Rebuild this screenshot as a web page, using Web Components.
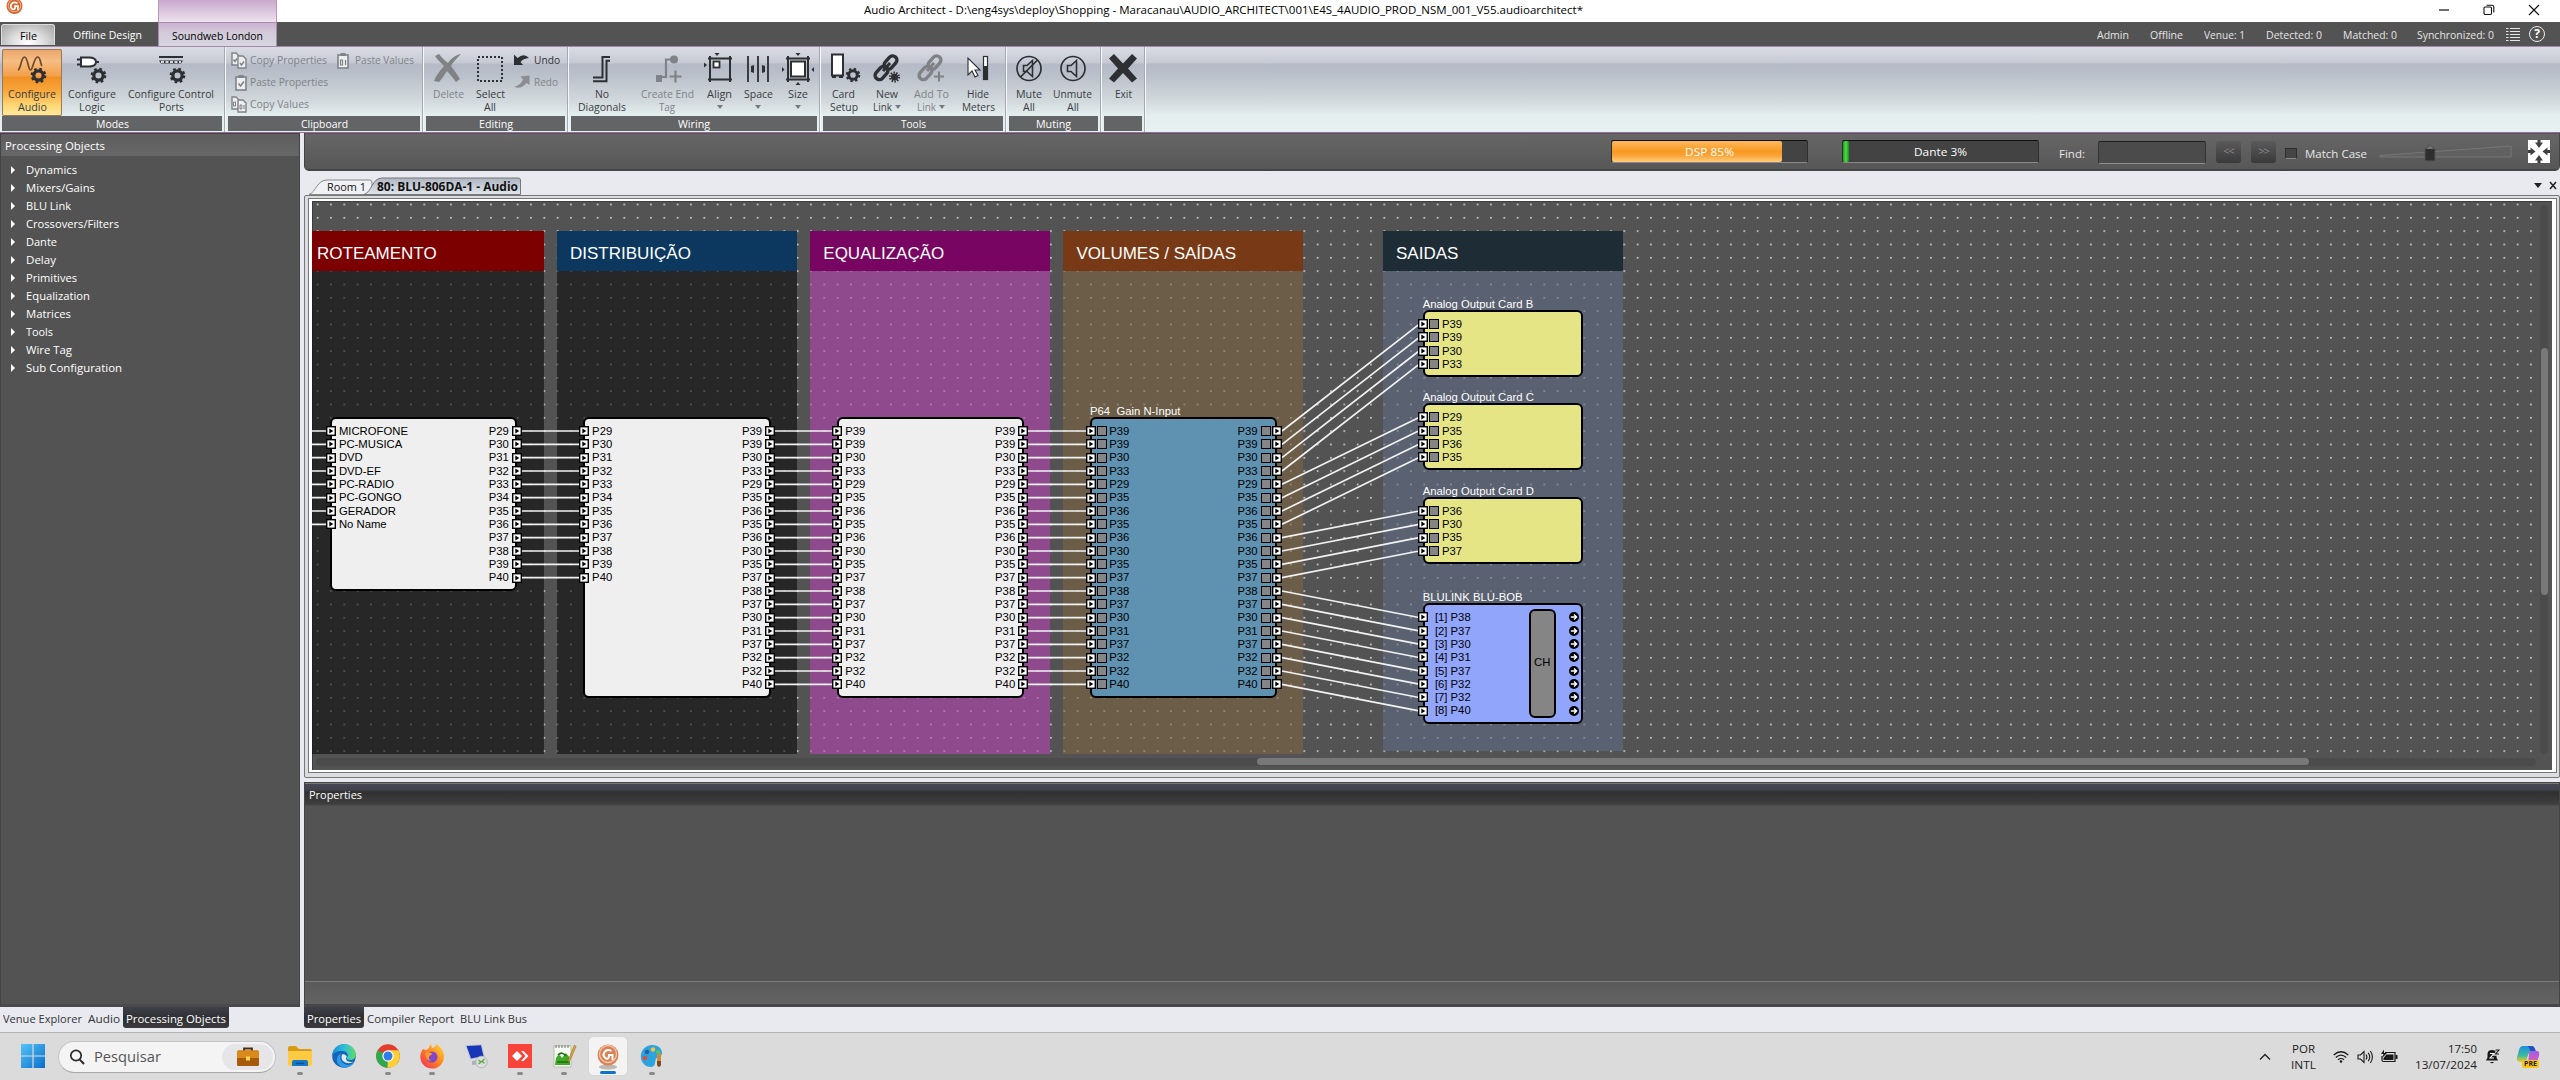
<!DOCTYPE html>
<html lang="pt-BR">
<head>
<meta charset="utf-8">
<title>Audio Architect</title>
<style>
html,body{margin:0;padding:0;width:2560px;height:1080px;overflow:hidden;background:#e8eaef}
body{font:11.5px/16px "Open Sans","Noto Sans",sans-serif;color:#111}
</style>
</head>
<body>
<audio-architect></audio-architect>
<script>
const make = (name, build, connected) => customElements.define(name, class extends HTMLElement {
  connectedCallback() {
    if (this.shadowRoot) return;
    this.attachShadow({ mode: 'open' }).innerHTML = build(this);
    if (connected) connected(this);
  }
});
const at = (el, n, d = '') => el.getAttribute(n) ?? d;

/* One line of text condensed or widened to a given width */
make('fit-text', el => `<style>:host{display:inline-block;white-space:pre;width:${at(el,'w')}px;text-align:left;flex:none}
span{display:inline-block;transform-origin:0 50%}</style><span><slot></slot></span>`, el => {
  const s = el.shadowRoot.querySelector('span');
  const n = s.offsetWidth ? s.getBoundingClientRect().width : 0;
  if (n) s.style.transform = `scaleX(${(+at(el,'w') / n).toFixed(4)})`;
});

/* ---------- icons ---------- */
const gear = (x, y, r, c = '#2e2f33') => {
  const t = 2 * Math.PI * r / 16;
  return `<circle cx="${x}" cy="${y}" r="${r*.72}" fill="none" stroke="${c}" stroke-width="${r*.5}"/><circle cx="${x}" cy="${y}" r="${r}" fill="none" stroke="${c}" stroke-width="${r*.42}" stroke-dasharray="${t}"/>`;
};
const D = '#2e2f33', G = '#808286';
const link = c => `<g fill="none" stroke="${c}" stroke-width="3.4"><rect x="-4.2" y="-7.5" width="8.4" height="15" rx="4.2" transform="translate(19.5 9.5) rotate(42)"/><rect x="-4.2" y="-7.5" width="8.4" height="15" rx="4.2" transform="translate(10.5 20) rotate(42)"/></g><path d="M12 18l7-8" stroke="${c}" stroke-width="3"/>`;
const frame = `<path d="M4 5.500H28M4 26.500H28M6 3v26M26 3v26" stroke="${D}" stroke-width="2" fill="none"/>`;
const clip = t => `<rect x="3" y="3" width="10" height="13" fill="#eceef0" stroke="${G}" stroke-width="1.600"/><rect x="5.500" y="1" width="5" height="3" fill="${G}"/>` + (t ? `<path d="M5.500 8v5h2v-5zM10.500 8v5" fill="none" stroke="${G}" stroke-width="1.200"/>` : `<path d="M5.500 9.500l2 2.500 3.500-4.500" fill="none" stroke="${G}" stroke-width="1.600"/>`);
const docs = t => `<path d="M1 1h4l3 3v9H1z" fill="#eceef0" stroke="${G}" stroke-width="1.400"/><path d="M7 4h5l3 3v9H7z" fill="#eceef0" stroke="${G}" stroke-width="1.400"/>` + (t ? `<path d="M2.500 6v4h2V6zM9 9v4h1.800V9zM13 9v4" fill="none" stroke="${G}" stroke-width="1"/>` : `<path d="M2.500 7.500l1.500 2 2-3M9 11l1.500 2 2.500-3.500" fill="none" stroke="${G}" stroke-width="1.400"/>`);
const speaker = (r = 0) => `<circle cx="16" cy="15.500" r="12" fill="none" stroke="${D}" stroke-width="1.700"/><path d="M10.500 12.500h3.500l5.500-5v16l-5.500-5h-3.500z" fill="none" stroke="${D}" stroke-width="1.600"/>${r ? `<path d="M7.500 24L24.500 7" stroke="${D}" stroke-width="1.700"/>` : ''}`;
const I = {
  audio: [32,32,`<path d="M2 17C5 16 5 4 8.500 4S12 17 14.500 17 18 4 21.500 4 24 11 26 13" fill="none" stroke="#6b4a2a" stroke-width="1.700"/>${gear(22.500,22.500,6.500)}`],
  logic: [32,32,`<path d="M5 4.500H14Q20 5 20 9t-6 4.500H5z" fill="#fff" stroke="${D}" stroke-width="2"/><path d="M1 6.500h4M1 11.500h4M20 9h3" stroke="${D}" stroke-width="2"/>${gear(22.500,22.500,6.500)}`],
  ports: [32,32,`<path d="M4 4h24" stroke="${D}" stroke-width="2"/><path d="M4 7.500h24l-2 3H6z" fill="${D}"/><path d="M6 9h20" stroke="#d5d8de" stroke-width="1.800" stroke-dasharray="3 1.500"/>${gear(22.500,22.500,6.500)}`],
  copyP: [16,17,docs(0)], copyV: [16,17,docs(1)], pasteP: [16,17,clip(0)], pasteV: [16,17,clip(1)],
  del: [32,32,`<path d="M3 3l4-2c3 4 6 7 9 9 3-4 7-8 13-9-4 4-8 8-10 12 3 4 6 8 9 13l-4 3c-3-4-6-8-9-11-3 4-5 8-8 11l-5-1c2-6 6-10 10-15C8 9 5 6 3 3z" fill="${G}"/>`],
  select: [32,32,`<rect x="4" y="4" width="24" height="24" fill="none" stroke="${D}" stroke-width="2" stroke-dasharray="2 2"/>`],
  undo: [16,14,`<path d="M0 1.500V12h9L6.500 9Q9 5.500 15 5 10-.5 3.500 5z" fill="${D}"/>`],
  redo: [16,14,`<path d="M15.500 0.500V10l-3-2Q7.500 14.500 0 12 7 10 9 4.500L6.500 1.500z" fill="#8b8d91"/>`],
  nodiag: [32,32,`<path d="M24 4h-7.500v20.500H7M24 7.800h-3.500v20.500H7" fill="none" stroke="${D}" stroke-width="2"/>`],
  endtag: [32,32,`<circle cx="23" cy="6.500" r="4" fill="${G}"/><path d="M5 22h6v7H5z" fill="${G}"/><path d="M10.500 24h4.500V6.500h6M24.500 17.500v12M18.500 23.500h12" fill="none" stroke="${G}" stroke-width="2.200"/>`],
  align: [32,32,`${frame}<rect x="9.500" y="8.500" width="6" height="6" fill="#fff" stroke="${D}" stroke-width="1.800"/><path d="M10.500 0h5l-2.500 3zM0 9.500v5l3-2.500z" fill="${D}"/>`],
  space: [32,32,`<path d="M6 3v26M16 3v26M26 3v26" stroke="${D}" stroke-width="1.800"/><path d="M9 13l3-1v8l-3-1zM23 13l-3-1v8l3-1z" fill="${D}"/>`],
  size: [32,32,`${frame}<rect x="9" y="8.500" width="14" height="15" fill="#fff" stroke="${D}" stroke-width="2"/><path d="M13.500 0h5L16 3zM13.500 32h5L16 29zM0 14v5l2.500-2.500zM32 14v5l-2.500-2.500z" fill="${D}"/>`],
  card: [32,32,`<rect x="4" y="1.500" width="11" height="21" fill="#fff" stroke="${D}" stroke-width="2"/><path d="M4 24h4M11 24h4" stroke="${D}" stroke-width="2"/>${gear(25,22,6)}`],
  newlink: [32,32,link(D)+`<circle cx="23.500" cy="24" r="3.500" fill="${D}"/><circle cx="23.500" cy="24" r="4.500" fill="none" stroke="${D}" stroke-width="2" stroke-dasharray="1.500 1.300"/>`],
  addlink: [32,32,link(G)+`<path d="M24 18.500v10M19 23.500h10" stroke="${G}" stroke-width="2"/>`],
  hide: [32,32,`<path d="M6 5v17l4-4 3 6 3-1.500-3-5.500h5z" fill="#fff" stroke="${D}" stroke-width="1.100"/><rect x="21.500" y="3.500" width="4" height="23" fill="#fff" stroke="${D}" stroke-width="1.200"/><path d="M21 13h5v14h-5z" fill="${D}"/>`],
  mute: [32,32,speaker(1)], unmute: [32,32,speaker()],
  exit: [32,32,`<path d="M2 5.500L7 1l9 9.500L25 1l5 4.500-9 10 9 10-5 4-9-9.500-9 9.500-5-4 9-10z" fill="${D}"/>`],
  min: [12,12,`<path d="M1 6h10" stroke="#111" stroke-width="1.200"/>`],
  restore: [12,12,`<rect x="1" y="3" width="7.500" height="7.500" rx="1.200" fill="none" stroke="#111" stroke-width="1.100"/><path d="M3.500 1.200h5.500q1.800 0 1.800 1.800v5.500" fill="none" stroke="#111" stroke-width="1.100"/>`],
  close: [12,12,`<path d="M1 1l10 10M11 1L1 11" stroke="#111" stroke-width="1.200"/>`],
  list: [14,14,`<path d="M0 .5h2.500M4 .5h10M0 3.500h2.500M4 3.500h10M0 6.500h2.500M4 6.500h10M0 9.500h2.500M4 9.500h10M0 12.500h2.500M4 12.500h10" stroke="#e6e6e6" stroke-width="1"/>`],
  expand: [22,23,`<path d="M0 0h22v23H0z" fill="#fff"/><path d="M9.500 0h3v2.500h2.500L11 8 7 2.500h2.500zM9.500 23h3v-2.500h2.500L11 15l-4 5.500h2.500zM0 10v3h2.500v2.500L7.500 11.500l-5-4V10zM22 10v3h-2.500v2.500l-5-4 5-4V10z" fill="#3f3f3f"/>`],
  logo: [17,17,`<circle cx="8.500" cy="8" r="8" fill="#d5662f"/><circle cx="8.500" cy="7.500" r="6.300" fill="none" stroke="#f5b08b" stroke-width="1"/><path d="M11.500 5.200Q7.500 3 5.500 6t1 5.200q3 1 2.500-3h3v4" fill="none" stroke="#fff" stroke-width="1.700"/>`],
  win: [24,24,`<defs><linearGradient id="w" x2="1" y2="1"><stop stop-color="#53c4f7"/><stop offset="1" stop-color="#0a6dcb"/></linearGradient></defs><path d="M0 0h11.400v11.400H0zM12.600 0H24v11.400H12.600zM0 12.600h11.400V24H0zM12.600 12.600H24V24H12.600z" fill="url(#w)"/>`],
  search: [16,16,`<circle cx="7" cy="6.500" r="5.200" fill="none" stroke="#2a2a2a" stroke-width="1.700"/><path d="M10.800 10.600l4.200 4.400" stroke="#2a2a2a" stroke-width="2"/>`],
  brief: [22,20,`<path d="M7 4V1.500h8V4" fill="none" stroke="#4a2e12" stroke-width="1.800"/><rect y="3.500" width="22" height="15.500" rx="1.500" fill="#a85a0c"/><path d="M0 5q0-1.500 1.500-1.500h19Q22 3.500 22 5v6H0z" fill="#d98a1c"/><rect x="9" y="9.500" width="4" height="4" fill="#ffd54a"/>`],
  folder: [24,24,`<path d="M0 4q0-2 2-2h6l3 3h11q2 0 2 2v3H0z" fill="#d99a16"/><path d="M0 7h24v13q0 2-2 2H2q-2 0-2-2z" fill="#ffcb45"/><path d="M4 22v-4q0-2 2-2h12q2 0 2 2v4z" fill="#1477c9"/><path d="M8 19.500h8" stroke="#0b4f94" stroke-width="1.500"/>`],
  edge: [24,24,`<defs><linearGradient id="e" x2="1"><stop stop-color="#1b8fe0"/><stop offset=".5" stop-color="#2bc0d8"/><stop offset="1" stop-color="#5fdc62"/></linearGradient></defs><circle cx="12" cy="12" r="11.800" fill="#1565b8"/><path d="M.3 11C1 4.500 6 .2 12 .2c7 0 11.800 5 11.800 10.200 0 4-3 5.600-5.500 5.600-2 0-3.500-.8-3.500-1.700 0-.6 1-1.200 1-3C15.800 8.500 13 7 9.500 7 5 7 1.500 9 .3 11z" fill="url(#e)"/><path d="M9.500 9C7 12 8 18.500 13.500 20.500c3 1 6 0 8.500-2-3 6-11 6.500-15 2.500-4-4-2-10 2.500-12z" fill="#2e9be8"/><path d="M10 10.500c-1.500 4 .5 7.500 5 8.500 3 .5 6-.5 7-1.500-1.500.8-8 1-8-3.200l.8-1.300c0-1.500-2.500-3.500-4.800-2.500z" fill="#dfeaf2"/>`],
  chrome: [24,24,`<circle cx="12" cy="12" r="11.800" fill="#e33b2e"/><path d="M12 12L1.800 6A11.800 11.800 0 0 0 11.500 23.800L17 15z" fill="#2da94f"/><path d="M12 12l-.5 11.800A11.800 11.800 0 0 0 22.200 6.200H12z" fill="#fdd033"/><circle cx="12" cy="12" r="5.700" fill="#fff"/><circle cx="12" cy="12" r="4.500" fill="#2f7de8"/>`],
  firefox: [24,24,`<defs><linearGradient id="f" x1="1" x2="0" y2="1"><stop stop-color="#ffdc3e"/><stop offset=".45" stop-color="#ff8a1f"/><stop offset="1" stop-color="#f0265a"/></linearGradient></defs><path d="M3 5l3 1 2-1 3-5 1 4q4-1 4-4c5 3 8 7 8 12.500A11.800 11.800 0 0 1 .3 13C.3 9.500 1.500 7 3 5z" fill="url(#f)"/><circle cx="12" cy="13" r="5.500" fill="#8446c8"/><path d="M5.500 9q4-2 7 1l-3 2q-2 3 2 5-6 0-6-8z" fill="#ff9a2e"/>`],
  monitor: [24,24,`<path d="M1 1l17-1 3 13-15 3z" fill="#c7cdd6"/><path d="M2.500 2l14.500-.8L19.500 12 7 14.500z" fill="#1836b8"/><path d="M8 17l7-1 2 4-9 1z" fill="#aab2c0"/><circle cx="17.500" cy="18" r="5.800" fill="#d9dee0" stroke="#a8b0b4" stroke-width=".8"/><path d="M14.500 16l2.500 2-2.500 2M20.500 15l-2.500 2.200 2.500 2" fill="none" stroke="#58ad3c" stroke-width="1.400"/>`],
  anydesk: [24,24,`<path d="M0 0h24v24H0z" fill="#f9443b"/><path d="M9 7l5 5-5 5-5-5z" fill="#fff"/><path d="M13 7h2.500l5 5-5 5H13l4.500-5z" fill="#fff"/>`],
  notes: [24,24,`<path d="M2 2h17v21H2z" fill="#f6faf2" stroke="#a9b5a0" stroke-width=".8"/><path d="M4 1v3M7 1v3M10 1v3M13 1v3M16 1v3" stroke="#777"/><path d="M4 14q3-6 6 0l4-5 4 5v7H3z" fill="#43a828"/><path d="M6 11q4-4 8 1M5 18h12" stroke="#1d6f18" stroke-width="1.700" fill="none"/><path d="M22.500 1L24 2.500l-6 14-2 2 .5-3z" fill="#e6a63a" stroke="#8a5a18" stroke-width=".5"/>`],
  aa: [24,26,`<ellipse cx="12" cy="23" rx="9" ry="2.500" fill="#bdb8b4"/><circle cx="12" cy="11" r="10.500" fill="#d98255"/><circle cx="12" cy="10" r="8.500" fill="none" stroke="#f3c5aa" stroke-width="1.300"/><path d="M15.500 7Q11 4.500 8.500 8t1.500 6.500q3 1 3-3.500h3.500v5" fill="none" stroke="#fff" stroke-width="2"/>`],
  paint: [24,24,`<path d="M12 1c7 0 10 4 10 8 0 5-6 3-6.500 7C15 19 15 23 11 23 5 23 .8 18 .8 12.500.8 6 6 1 12 1z" fill="#2aa3de"/><circle cx="7" cy="8" r="2.200" fill="#1f5fa8"/><circle cx="13" cy="5.500" r="2.200" fill="#f5c534"/><circle cx="5" cy="14" r="2.200" fill="#e64b3b"/><circle cx="18" cy="8" r="2" fill="#5fc35b"/><path d="M17 10l4-1v9h-4z" fill="#c98b3e"/><path d="M17 17h4v4q-2 4-4 0z" fill="#7b4a1e"/>`],
  caret: [12,8,`<path d="M1 6.500L6 1.500l5 5" fill="none" stroke="#222" stroke-width="1.300"/>`],
  wifi: [16,14,`<path d="M.7 5Q8-1.500 15.300 5M2.800 7.500q5.200-4.700 10.400 0M5 9.800q3-2.600 6 0" fill="none" stroke="#1a1a1a" stroke-width="1.200"/><circle cx="8" cy="11.500" r="1.300" fill="#1a1a1a"/>`],
  vol: [17,14,`<path d="M1 5h2.500L7 1.500v11L3.500 9H1z" fill="none" stroke="#1a1a1a" stroke-width="1.100"/><path d="M9 4.500q1.800 2.500 0 5M11.200 2.800q3 4.200 0 8.400M13.400 1q4 6 0 12" fill="none" stroke="#1a1a1a" stroke-width="1.100"/>`],
  batt: [17,14,`<path d="M4 2.500h10v9H2.500q-1.500 0-1.500-1.500V6" fill="none" stroke="#1a1a1a" stroke-width="1.200"/><path d="M5.500 4.500H12.500v5.500H2.500V8zM14.500 5H16.500v4h-2zM3-.5L0 4h2.500L1 8l5-5H3z" fill="#1a1a1a"/>`],
  bell: [15,15,`<path d="M1 11.500l1.500-3V5q0-4 4.500-4t4.500 4v3.500l1.500 3zM5 13h4q-2 2.500-4 0z" fill="#1a1a1a"/><path d="M5 4.500h4L5 9h4" fill="none" stroke="#fff" stroke-width="1.100"/><path d="M10 1h4l-4 4.500h4" fill="none" stroke="#dcdcdc" stroke-width="2.600"/><path d="M10.500 1h3.500l-3.500 4h3.500" fill="none" stroke="#1a1a1a" stroke-width="1.100"/>`]
};
make('ui-icon', el => { const [w,h,s] = I[at(el,'name')];
  return `<style>:host{display:block;flex:none;width:${w}px;height:${h}px}svg{display:block;overflow:visible}</style><svg width="${w}" height="${h}" viewBox="0 0 ${w} ${h}">${s}</svg>`; });

/* ---------- ribbon ---------- */
make('ribbon-group', el => `<style>
:host{display:flex;flex:none;height:85px}
.in{display:flex;flex-direction:column;width:${at(el,'w')}px;padding-top:2px}
.c{display:flex;height:67px}
.l{height:15px;background:#636466;color:#fff;display:flex;justify-content:center;align-items:center;line-height:15px}
.s{width:1px;margin:0 2px;background:#f4f6f8;border-left:1px solid #a4a9b3;border-right:0}
</style><div class="in"><div class="c"><slot></slot></div><div class="l">${at(el,'label') ? `<fit-text w="${at(el,'lw')}">${at(el,'label')}</fit-text>` : ''}</div></div><div class="s"></div>`);

/* lines: "text:width|text:width"; a "v" line draws the drop-down arrow */
make('ribbon-button', el => `<style>
:host{display:flex;flex-direction:column;align-items:center;flex:none;box-sizing:border-box;width:${at(el,'w')}px;height:67px;padding-top:4px;color:${el.hasAttribute('off') ? '#808388' : '#3a3c42'};
${el.hasAttribute('on') ? 'background:linear-gradient(#e8a468,#f6bd84 18%,#f3a04a 40%,#f09026 42%,#f9a63a 62%,#ffd978 85%,#fdeaa0);box-shadow:inset 0 0 0 1px #9b7a5a;border-radius:2px' : ''}}
.t{margin-top:2px;display:flex;flex-direction:column;align-items:center}
.r{height:13px;line-height:13px;display:flex;align-items:center;gap:3px}
i{border:3px solid transparent;border-top:4px solid #777a80;border-bottom:0}
</style><ui-icon name="${at(el,'icon')}"></ui-icon><div class="t">${at(el,'lines').split('|').map(l => { const [t,w,v] = l.split(':'); return `<div class="r">${t ? `<fit-text w="${w}">${t}</fit-text>` : ''}${v ? '<i></i>' : ''}</div>`; }).join('')}</div>`);

make('ribbon-small', el => `<style>
:host{display:flex;align-items:center;height:22px;flex:none;color:${el.hasAttribute('off') ? '#808388' : '#2e2f33'}}
.i{width:${at(el,'iw',19)}px;display:flex;justify-content:flex-start}
</style><div class="i"><ui-icon name="${at(el,'icon')}"></ui-icon></div><fit-text w="${at(el,'w')}"><slot></slot></fit-text>`);

make('app-ribbon', () => `<style>
:host{display:flex;height:87px;box-sizing:border-box;border-top:1px solid #a08aa8;border-bottom:1px solid #8f7396;padding-left:2px;
background:linear-gradient(#dadbe5,#c6c9d3 16px,#b4bac6 17px,#bcc2cb 30px,#d3dadd 55px,#e4eeee 68px,#e8f1f2)}
.col{display:flex;flex-direction:column;padding-top:0}
.row{display:flex}
</style>
<ribbon-group w="220" label="Modes" lw="33">
<ribbon-button on w="60" icon="audio" lines="Configure:48|Audio:29"></ribbon-button>
<ribbon-button w="60" icon="logic" lines="Configure:48|Logic:26"></ribbon-button>
<ribbon-button w="98" icon="ports" lines="Configure Control:86|Ports:25"></ribbon-button></ribbon-group>
<ribbon-group w="192" label="Clipboard" lw="47"><div class="col" style="padding-left:3px">
<div class="row"><ribbon-small off icon="copyP" w="77">Copy Properties</ribbon-small><ribbon-small off icon="pasteV" w="59" iw="20" style="margin-left:8px">Paste Values</ribbon-small></div>
<ribbon-small off icon="pasteP" w="78" iw="17" style="margin-left:2px">Paste Properties</ribbon-small>
<ribbon-small off icon="copyV" w="59">Copy Values</ribbon-small></div></ribbon-group>
<ribbon-group w="139" label="Editing" lw="34">
<ribbon-button off w="44" icon="del" lines="Delete:31"></ribbon-button>
<ribbon-button w="40" icon="select" lines="Select:29|All:12"></ribbon-button>
<div class="col" style="padding-left:4px"><ribbon-small icon="undo" iw="20" w="26">Undo</ribbon-small><ribbon-small off icon="redo" iw="20" w="24">Redo</ribbon-small></div></ribbon-group>
<ribbon-group w="246" label="Wiring" lw="32">
<ribbon-button w="62" icon="nodiag" lines="No:14|Diagonals:48"></ribbon-button>
<ribbon-button off w="68" icon="endtag" lines="Create End:53|Tag:16"></ribbon-button>
<ribbon-button w="37" icon="align" lines="Align:25|::v"></ribbon-button>
<ribbon-button w="40" icon="space" lines="Space:29|::v"></ribbon-button>
<ribbon-button w="39" icon="size" lines="Size:20|::v"></ribbon-button></ribbon-group>
<ribbon-group w="180" label="Tools" lw="25">
<ribbon-button w="41" icon="card" lines="Card:23|Setup:28"></ribbon-button>
<ribbon-button w="45" icon="newlink" lines="New:22|Link:19:v"></ribbon-button>
<ribbon-button off w="44" icon="addlink" lines="Add To:35|Link:19:v"></ribbon-button>
<ribbon-button w="50" icon="hide" lines="Hide:22|Meters:33"></ribbon-button></ribbon-group>
<ribbon-group w="89" label="Muting" lw="35">
<ribbon-button w="39" icon="mute" lines="Mute:26|All:12"></ribbon-button>
<ribbon-button w="49" icon="unmute" lines="Unmute:39|All:12"></ribbon-button></ribbon-group>
<ribbon-group w="38" label=""><ribbon-button w="38" icon="exit" lines="Exit:17"></ribbon-button></ribbon-group>`);

make('title-bar', () => `<style>
:host{display:flex;height:22px;background:#fff;align-items:stretch;color:#000}
.a{width:158px;padding-left:6px;box-sizing:border-box;overflow:hidden}
ui-icon{margin-top:-2px}
.p{width:119px;box-sizing:border-box;border:1px solid #b897bb;border-top:0;border-bottom:0;background:linear-gradient(#c7a9cb,#efe3f0)}
.t{margin-left:587px;line-height:19px;width:1574px}
.w ui-icon{margin-top:4px}.w{display:flex;gap:33px}
</style><div class="a"><ui-icon name="logo"></ui-icon></div><div class="p"></div>
<div class="t"><fit-text w="719">Audio Architect - D:\\eng4sys\\deploy\\Shopping - Maracanau\\AUDIO_ARCHITECT\\001\\E4S_4AUDIO_PROD_NSM_001_V55.audioarchitect*</fit-text></div>
<div class="w"><ui-icon name="min"></ui-icon><ui-icon name="restore"></ui-icon><ui-icon name="close"></ui-icon></div>`);

make('menu-tabs', () => `<style>
:host{display:flex;height:24px;background:#535353;color:#fff;line-height:26px;position:relative}
.f{width:54px;height:21px;margin:2px 0 0 1px;border-radius:3px 3px 0 0;background:radial-gradient(ellipse at 50% 90%,#fff,#dcdcdc 45%,#a2a2a2);color:#000;text-align:center;line-height:22px;box-sizing:border-box;border:1px solid #ddd;border-bottom:0}
.o{padding-left:18px;width:85px;box-sizing:content-box}
.s{width:119px;box-sizing:border-box;background:linear-gradient(#cbb2d0,#d3c9d9 40%,#d6d6e0);border:1px solid #a88aae;border-bottom:0;color:#000;padding-left:13px;line-height:25px}
.r{margin-left:1820px;display:flex;color:#e4e4e4}
ui-icon{margin-top:6px}
.q{width:14px;height:14px;border:1px solid #eee;border-radius:50%;margin:4px 0 0 9px;text-align:center;line-height:14px;font-weight:700;font-size:12px;color:#fff}
</style><div class="f"><fit-text w="17">File</fit-text></div><div class="o"><fit-text w="69">Offline Design</fit-text></div><div class="s"><fit-text w="91">Soundweb London</fit-text></div>
<div class="r"><fit-text w="32">Admin</fit-text><fit-text w="33" style="margin-left:21px">Offline</fit-text><fit-text w="41" style="margin-left:21px">Venue: 1</fit-text><fit-text w="56" style="margin-left:21px">Detected: 0</fit-text><fit-text w="54" style="margin-left:21px">Matched: 0</fit-text><fit-text w="77" style="margin-left:20px">Synchronized: 0</fit-text><ui-icon name="list" style="margin-left:12px"></ui-icon><div class="q">?</div></div>`);

/* ---------- left panel ---------- */
make('object-tree', () => `<style>
:host{display:flex;flex-direction:column;width:300px;box-sizing:border-box;background:#535353;color:#fff;border:1px solid #444;border-top:1px solid #473d4a;border-bottom:3px solid #4a4a4a}
.h{height:22px;background:linear-gradient(#5e5e5e,#676767);padding-left:4px;line-height:23px;margin-bottom:5px}
.i{height:18px;line-height:18px;display:flex;align-items:center}
.i::before{content:"";border:4px solid transparent;border-left:4.500px solid #fff;border-right:0;margin:0 11px 0 10px}
</style><div class="h"><fit-text w="100">Processing Objects</fit-text></div>
${[['Dynamics',51],['Mixers/Gains',69],['BLU Link',45],['Crossovers/Filters',93],['Dante',31],['Delay',30],['Primitives',51],['Equalization',64],['Matrices',45],['Tools',27],['Wire Tag',46],['Sub Configuration',96]].map(([t,w]) => `<div class="i"><fit-text w="${w}">${t}</fit-text></div>`).join('')}`);

/* ---------- meter bar ---------- */
make('level-meter', el => `<style>
:host{display:block;width:197px;height:23px;box-sizing:border-box;background:#434343;border:1px solid #2e2e2e;border-top-color:#111;border-bottom-color:#8a8a8a;border-radius:2px}
.o{display:grid}.o>*{grid-area:1/1;height:21px}
.f{width:${at(el,'fill')}px;background:${at(el,'bg')};border-radius:2px}
.t{text-align:center;color:#fff;line-height:22px}
</style><div class="o"><div class="f"></div><div class="t"><fit-text w="${at(el,'w')}"><slot></slot></fit-text></div></div>`);

make('tool-strip', () => `<style>
:host{display:flex;align-items:flex-start;height:38px;box-sizing:border-box;background:linear-gradient(#666,#575757);border:1px solid #444;border-top-color:#5d4f5f;border-bottom:2px solid #464646;border-radius:0 0 5px 5px;color:#e8e8e8;padding:6px 0 0 1306px}
.find{margin-left:20px;line-height:27px}
.in{width:108px;height:23px;margin:1px 0 0 13px;box-sizing:border-box;background:#4b4b4b;border:1px solid #333;border-top-color:#1d1d1d;border-bottom-color:#8d8d8d;border-radius:2px}
.b{width:25px;height:22px;margin-left:10px;margin-top:1px;background:linear-gradient(#5a5a5a,#3a3a3a);border-radius:3px;color:#888;text-align:center;line-height:19px;font-size:11px;letter-spacing:-1px}
.c{width:12px;height:11px;box-sizing:border-box;margin:8px 8px 0 9px;background:#454545;border:1px solid #2d2d2d;border-bottom-color:#888}
.m{line-height:27px}
svg{margin:4px 0 0 12px;display:block}
ui-icon{margin:0 0 0 15px}
</style>
<level-meter fill="170" w="49" bg="linear-gradient(#ffb95e,#f79a22 50%,#fba53a 70%,#ffce80)">DSP 85%</level-meter>
<level-meter fill="6" w="53" bg="linear-gradient(90deg,#1fa01f,#45e045,#1a8a1a)" style="margin-left:34px">Dante 3%</level-meter>
<div class="find"><fit-text w="26">Find:</fit-text></div><div class="in"></div>
<div class="b">&lt;&lt;</div><div class="b">&gt;&gt;</div><div class="c"></div><div class="m"><fit-text w="62">Match Case</fit-text></div>
<svg width="134" height="18"><path d="M1 11.500L132 2v11H1z" fill="#616161" stroke="#777" stroke-width="1"/><path d="M46 5l5-4 5 4v12H46z" fill="#2f2f2f" stroke="#555"/><path d="M47 5l4-3.500 4 3.500z" fill="#777"/></svg>
<ui-icon name="expand"></ui-icon>`);

make('doc-tabs', () => `<style>
:host{display:flex;height:24px;position:relative;justify-content:space-between;color:#111}
.l{display:grid;width:230px}.l>*{grid-area:1/1}
.t{display:flex;padding:8px 0 0 23px;line-height:16px}
b{margin-left:11px}
.r{display:flex;align-items:center;gap:7px;padding-right:3px;padding-top:4px}
.r i{border:4px solid transparent;border-top:5px solid #222;border-bottom:0}
.r svg{display:block}
</style><div class="l"><svg width="230" height="24"><defs><linearGradient id="g" x2="0" y2="1"><stop stop-color="#aeb5c2"/><stop offset="1" stop-color="#e2e6ec"/></linearGradient></defs>
<path d="M5 23.500C12 21 13 9 23 9H66q2 0 2 3v11.500z" fill="#f0f1f4" stroke="#888"/>
<path d="M60 23.500C68 21 68 7 78 7H214.500q2 0 2 2v14.500z" fill="url(#g)" stroke="#777"/></svg>
<div class="t"><fit-text w="39">Room 1</fit-text><b><fit-text w="141">80: BLU-806DA-1 - Audio</fit-text></b></div></div>
<div class="r"><i></i><svg width="8" height="9"><path d="M1 1l6 7M7 1L1 8" stroke="#222" stroke-width="1.500"/></svg></div>`);

/* ---------- signal flow canvas ---------- */
const P = 40 / 3;
make('flow-zone', el => `<style>
:host{display:block;position:absolute;left:${at(el,'x')}px;top:30px;width:${at(el,'w')}px;height:${at(el,'h',523)}px;background:${at(el,'bg')}}
.h{height:40px;background:${at(el,'hd')};color:#fff;font:17px/46px "Liberation Sans",Arial,sans-serif;padding-left:${at(el,'p',13)}px;white-space:pre}
</style><div class="h"><slot></slot></div>`);

make('dsp-block', el => {
  const list = n => at(el,n) ? at(el,n).split(',') : [];
  const meter = el.hasAttribute('meters') ? '<s></s>' : '';
  const port = `<svg width="10" height="10"><rect x=".7" y=".7" width="8.600" height="8.600" fill="#fff" stroke="#000" stroke-width="1.400"/><path d="M3.300 2.500v5L7.300 5z" fill="#000"/></svg>`;
  const bob = el.hasAttribute('bob');
  return `<style>
:host{display:block;position:absolute;left:${at(el,'x')}px;top:${at(el,'y')}px;width:${at(el,'w')}px;height:${at(el,'h')}px;font:11.300px/13.333px "Liberation Sans",Arial,sans-serif;color:#000}
.n{position:absolute;left:0;top:-12px;color:#fff;white-space:pre}
.box{box-sizing:border-box;width:100%;height:100%;background:${at(el,'bg','#efefef')};border:2px solid #000;border-radius:6px;display:flex;justify-content:space-between;padding-top:5.300px}
.c div{display:flex;align-items:center;height:13.333px;white-space:pre}
.i{margin-left:-6.300px}.o{margin-right:-6.300px}
.o div{justify-content:flex-end}
svg{display:block;flex:none}
span{margin:0 3px 0 3px;position:relative;top:.5px}
s{width:8px;height:8px;border:1.300px solid #000;background:#858585;margin:0 0 0 1px}
s+span{margin-left:2.500px}
.o s{margin:0 1px 0 0}
.bob .i span{margin-left:6.500px}
.ch{width:27px;height:109px;box-sizing:border-box;border:2px solid #000;border-radius:6px;background:#858585;text-align:center;line-height:103px;margin-left:auto;margin-right:13px;margin-top:-1.500px}
.ar{margin-right:2.500px}
</style>${at(el,'title') ? `<div class="n">${at(el,'title')}</div>` : ''}
<div class="box${bob ? ' bob' : ''}"><div class="c i">${list('in').map(t => `<div>${port}${meter}<span>${t}</span></div>`).join('')}</div>
${bob ? `<div class="ch">CH</div><div class="c ar">${'<div><svg width="10" height="10"><circle cx="5" cy="5" r="5"/><path d="M1.800 5h5.500M5 2.500L7.600 5 5 7.500" fill="none" stroke="#fff" stroke-width="1.400"/></svg></div>'.repeat(8)}</div>` : `<div class="c o">${list('out').map(t => `<div><span>${t}</span>${meter}${port}</div>`).join('')}</div>`}</div>`;
});

const mixOut = 'P39,P39,P30,P33,P29,P35,P36,P35,P36,P30,P35,P37,P38,P37,P30,P31,P37,P32,P32,P40';
const src = 'P29,P30,P31,P32,P33,P34,P35,P36,P37,P38,P39,P40';
make('flow-canvas', () => {
  let w = '';
  const y0 = 230, line = (a,b,c,d) => w += `M${a} ${b.toFixed(2)}L${c} ${d.toFixed(2)}`;
  for (let i = 0; i < 8; i++) line(0, y0 + i*P, 14, y0 + i*P);
  for (let i = 0; i < 12; i++) line(209, y0 + i*P, 268, y0 + i*P);
  for (let i = 0; i < 20; i++) { const y = y0 + i*P; line(463, y, 521, y); line(716, y, 774, y);
    const t = i < 4 ? 123.300 + i*P : i < 8 ? 216.500 + (i-4)*P : i < 12 ? 310 + (i-8)*P : 416.500 + (i-12)*P;
    line(970, y, 1107, t); }
  return `<style>
:host{display:block;position:relative;width:2240px;height:569px;background:#535353;overflow:hidden;box-shadow:inset 0 1px #3c3c3c,inset 1px 0 #3c3c3c}
.bg,.wires{position:absolute;left:0;top:0;display:block}
.sh{position:absolute;left:4px;top:557px;width:2220px;height:8px;border-radius:4px;background:#4b4b4b}
.sh i{display:block;margin-left:941px;width:1052px;height:7px;border-radius:4px;background:#787878}
.sv{position:absolute;left:2228px;top:4px;width:8px;height:549px;border-radius:4px;background:#4b4b4b}
.sv i{display:block;margin:143px 0 0 .5px;width:7px;height:247px;border-radius:4px;background:#787878}
.sv::before{content:"";display:table}
</style>
<svg class="bg" width="2224" height="553"><defs><pattern id="d" x="4.800" y="2.600" width="${P}" height="${P}" patternUnits="userSpaceOnUse"><rect width="1.600" height="1.600" fill="#dcdcdc"/></pattern></defs><rect width="2224" height="553" fill="url(#d)"/></svg>
<flow-zone x="0" w="232" p="5" bg="rgba(10,10,10,.6)" hd="#7d0000">ROTEAMENTO</flow-zone>
<flow-zone x="245" w="240" bg="rgba(10,10,10,.6)" hd="#0c3860">DISTRIBUIÇÃO</flow-zone>
<flow-zone x="498.300" w="240" bg="rgba(181,68,178,.6)" hd="#780561">EQUALIZAÇÃO</flow-zone>
<flow-zone x="751.400" w="240" bg="rgba(123,100,65,.6)" hd="#783a16">VOLUMES / SAÍDAS</flow-zone>
<flow-zone x="1071" w="240" h="520" bg="rgba(95,107,132,.6)" hd="#1e2c36">SAIDAS</flow-zone>
<svg class="wires" width="2224" height="553"><path d="${w}" stroke="#f2f2f2" stroke-width="1.700" fill="none"/></svg>
<dsp-block x="18.200" y="216" w="187.300" h="173.700" in="MICROFONE,PC-MUSICA,DVD,DVD-EF,PC-RADIO,PC-GONGO,GERADOR,No Name" out="${src}"></dsp-block>
<dsp-block x="271.400" y="216" w="187.300" h="280.500" in="${src}" out="${mixOut}"></dsp-block>
<dsp-block x="524.600" y="216" w="187.300" h="280.500" in="${mixOut}" out="${mixOut}"></dsp-block>
<dsp-block x="778" y="216" w="187.300" h="280.500" meters bg="#5f92b1" title="P64  Gain N-Input" in="${mixOut}" out="${mixOut}"></dsp-block>
<dsp-block x="1110.700" y="109.200" w="160.500" h="67" meters bg="#e6e586" title="Analog Output Card B" in="P39,P39,P30,P33"></dsp-block>
<dsp-block x="1110.700" y="202.400" w="160.500" h="67" meters bg="#e6e586" title="Analog Output Card C" in="P29,P35,P36,P35"></dsp-block>
<dsp-block x="1110.700" y="296" w="160.500" h="67" meters bg="#e6e586" title="Analog Output Card D" in="P36,P30,P35,P37"></dsp-block>
<dsp-block x="1110.700" y="402.400" w="160.500" h="121" bob bg="#91a5fb" title="BLULINK BLU-BOB" in="[1] P38,[2] P37,[3] P30,[4] P31,[5] P37,[6] P32,[7] P32,[8] P40"></dsp-block>
<div class="sh"><i></i></div><div class="sv"><i></i></div>`;
});

make('doc-frame', () => `<style>
:host{display:block;box-sizing:border-box;height:583px;border:1px solid #777;border-radius:2px;background:#dcdde0;padding:2px 2px 3px 3px}
.a{border:1px solid #777;background:#fff;padding:2px 3px 2px 3px;height:569px}
</style><div class="a"><flow-canvas></flow-canvas></div>`);

make('props-panel', () => `<style>
:host{display:flex;flex-direction:column;justify-content:space-between;height:225px;box-sizing:border-box;background:#535353;border:1px solid #444;border-bottom:3px solid #474747;color:#fff}
.h{height:22px;padding-left:4px;line-height:22px;background:linear-gradient(#454854,#3f424c 6px,#303030 8px,#3e3e3e 20px,#505050);border-top:1px solid #777}
.f{height:22px;border-top:1px solid #7b7b7b;background:linear-gradient(#5a5a5a,#636363)}
</style><div class="h"><fit-text w="53">Properties</fit-text></div><div class="f"></div>`);

make('bottom-tabs', () => `<style>
:host{display:flex;height:25px;color:#333;line-height:23px}
.s{height:21px;background:linear-gradient(#3f414b,#2f3033 50%,#3a3a3c);color:#fff;border-radius:0 0 3px 3px;padding:0 3px}
.l{width:304px;display:flex;padding-left:3px;box-sizing:border-box}
</style><div class="l"><fit-text w="79">Venue Explorer</fit-text><fit-text w="32" style="margin:0 3px 0 6px">Audio</fit-text><div class="s"><fit-text w="100">Processing Objects</fit-text></div></div>
<div class="s"><fit-text w="54">Properties</fit-text></div><fit-text w="87" style="margin-left:3px">Compiler Report</fit-text><fit-text w="67" style="margin-left:6px">BLU Link Bus</fit-text>`);

/* ---------- taskbar ---------- */
make('task-icon', el => `<style>
:host{display:flex;flex-direction:column;align-items:center;width:38px;height:38px;box-sizing:border-box;border-radius:4px;padding-top:7px;${at(el,'state') == 'on' ? 'background:#f3f3f3;box-shadow:0 0 1px #aaa' : ''}}
.b{height:24px}
i{height:3px;border-radius:2px;margin-top:${at(el,'state') == 'on' ? 3 : 4}px;width:${{on:16,run:6}[at(el,'state')] || 0}px;background:${at(el,'state') == 'on' ? '#1272cc' : '#8a8a8a'}}
</style><div class="b"><ui-icon name="${at(el,'name')}"></ui-icon></div><i></i>`);

make('task-bar', () => `<style>
:host{display:flex;height:48px;box-sizing:border-box;background:#dbdbdb;border-top:1px solid #b4b4b4;justify-content:space-between;color:#1c1c1c}
.l{display:flex;align-items:flex-start;padding:4px 0 0 21px}
.l>ui-icon{margin-top:7px}
.q{display:flex;align-items:center;margin:4px 5px 0 13px;width:216px;height:30px;border:1px solid #c4c4c4;border-bottom-color:#a8a8a8;border-radius:16px;background:#f4f4f4;font-size:14px;color:#555}
.q>ui-icon{margin:-1px 0 0 10px}.q fit-text{margin-left:9px}
.p{margin-left:auto;width:51px;height:26px;border-radius:13px;background:#e6e6e8;display:flex;align-items:center;justify-content:center;margin-right:2px}
.g{display:flex;gap:6px}
.r{display:flex;align-items:center;padding-right:20px}
.c{display:flex;flex-direction:column;align-items:center;line-height:16px}
.cp{position:relative;width:24px;height:24px}
.cp svg{display:block}
.cp b{position:absolute;left:6px;top:15px;width:17px;height:8px;background:#fbc512;border-radius:2px;font:700 7px/8px "Open Sans",sans-serif;text-align:center;color:#222}
</style>
<div class="l"><ui-icon name="win"></ui-icon><div class="q"><ui-icon name="search"></ui-icon><fit-text w="67">Pesquisar</fit-text><div class="p"><ui-icon name="brief"></ui-icon></div></div>
<div class="g">${[['folder','run'],['edge',''],['chrome','run'],['firefox','run'],['monitor',''],['anydesk','run'],['notes','run'],['aa','on'],['paint','run']].map(([n,s]) => `<task-icon name="${n}" state="${s}"></task-icon>`).join('')}</div></div>
<div class="r"><ui-icon name="caret"></ui-icon>
<div class="c" style="margin-left:20px"><fit-text w="23">POR</fit-text><fit-text w="25">INTL</fit-text></div>
<ui-icon name="wifi" style="margin-left:17px"></ui-icon><ui-icon name="vol" style="margin-left:8px"></ui-icon><ui-icon name="batt" style="margin-left:7px"></ui-icon>
<div class="c" style="margin-left:17px;align-items:flex-end"><fit-text w="29">17:50</fit-text><fit-text w="62">13/07/2024</fit-text></div>
<ui-icon name="bell" style="margin-left:8px"></ui-icon>
<div class="cp" style="margin-left:16px"><svg width="24" height="24"><defs><linearGradient id="a" x2="0" y2="1"><stop stop-color="#1d8fe0"/><stop offset=".6" stop-color="#3fba9a"/><stop offset="1" stop-color="#f4c92e"/></linearGradient><linearGradient id="b" x2="0" y2="1"><stop stop-color="#a45be8"/><stop offset="1" stop-color="#f0609a"/></linearGradient></defs><path d="M7 1h9q2 0 3 3l1 3h-5q-2 0-3 3l-2 7H4q-4 0-3-5l2-7q1-4 4-4z" fill="url(#a)"/><path d="M12 1h4q2 0 3 3l1 3h-5z" fill="#1e51c4"/><path d="M15 6h6q3 0 2 5l-2 6q-1 4-4 4H8q3 0 4-4l1-7q0-4 2-4z" fill="url(#b)"/></svg><b>PRE</b></div></div>`);

make('audio-architect', () => `<style>
:host{display:flex;flex-direction:column;width:2560px;height:1080px;background:#e8eaef}
.m{display:flex;height:874px;gap:4px}
.r{width:2256px;display:flex;flex-direction:column}
props-panel{margin-top:4px}
</style><title-bar></title-bar><menu-tabs></menu-tabs><app-ribbon></app-ribbon>
<div class="m"><object-tree></object-tree><div class="r"><tool-strip></tool-strip><doc-tabs></doc-tabs><doc-frame></doc-frame><props-panel></props-panel></div></div>
<bottom-tabs></bottom-tabs><task-bar></task-bar>`);
</script>
</body>
</html>
